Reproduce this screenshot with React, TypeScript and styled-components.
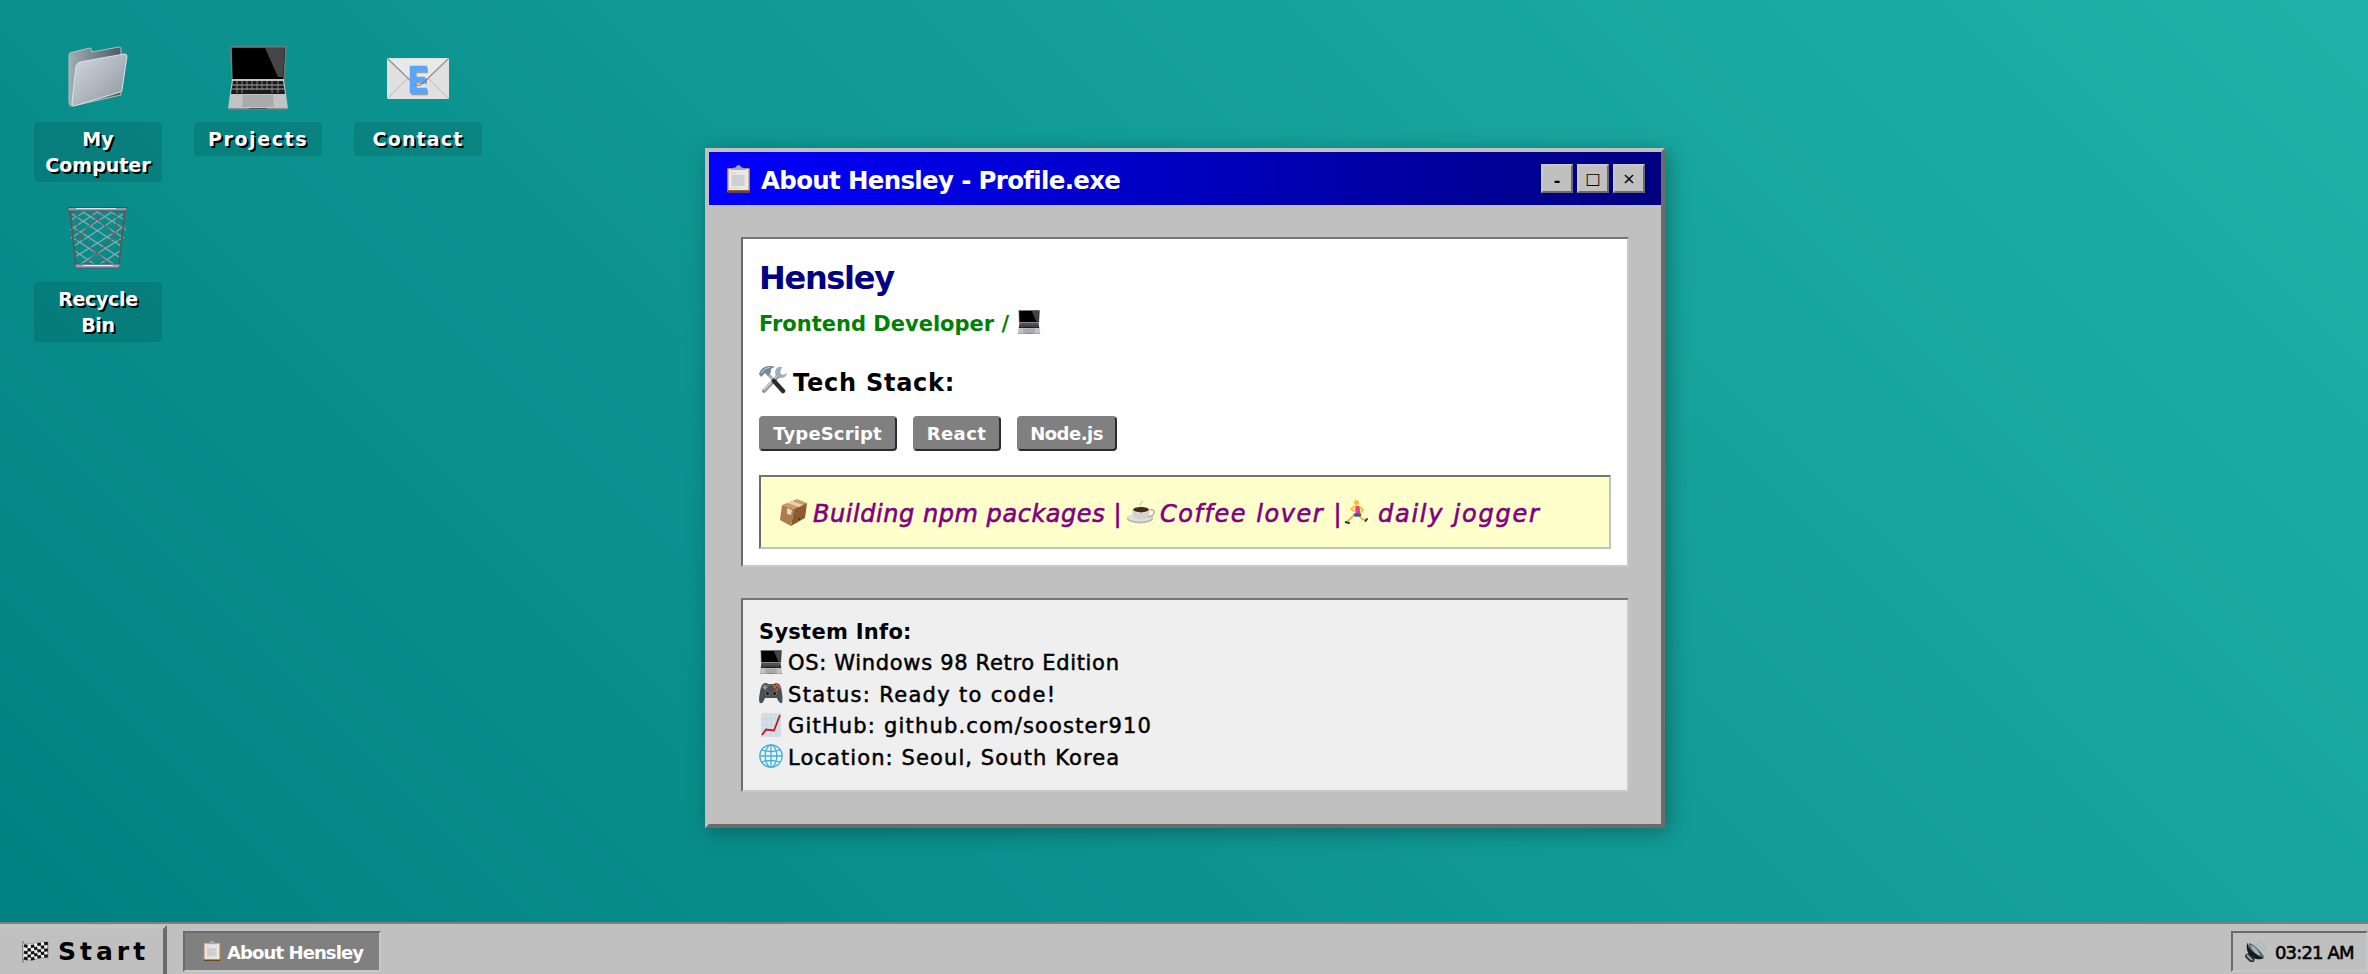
import React from 'react';
import styled, { createGlobalStyle } from 'styled-components';

const GlobalStyle = createGlobalStyle`
  * { box-sizing: border-box; }
  body {
    margin: 0;
    overflow: hidden;
    font-family: "DejaVu Sans", sans-serif;
    color: #000;
  }
`;

const Screen = styled.div`
  position: relative;
  width: 100%;
  height: 974px;
  display: flex;
  flex-direction: column;
  background: linear-gradient(45deg, #008080, #20b2aa);
`;

const Desktop = styled.main`
  flex: 1;
  position: relative;
  padding: 46px 34px;
`;

const IconGrid = styled.div`
  display: grid;
  grid-template-columns: repeat(3, 128px);
  grid-auto-rows: 136px;
  gap: 24px 32px;
`;

const Shortcut = styled.div`
  display: flex;
  flex-direction: column;
  align-items: center;
  gap: 12px;
  svg { flex: none; }
`;

const ShortcutLabel = styled.span<{ $spacing: number }>`
  width: 128px;
  padding: 4px 6px;
  border-radius: 4px;
  background: rgba(0, 0, 0, 0.1);
  color: #fff;
  font-size: 19px;
  font-weight: 700;
  line-height: 26px;
  letter-spacing: ${(p) => p.$spacing}px;
  text-align: center;
  text-shadow: 2px 2px 0 #000;
`;

const Window = styled.section`
  position: absolute;
  left: 705px;
  top: 148px;
  width: 960px;
  border: 4px solid;
  border-color: #c0c0c0 #6b6b6b #6b6b6b #c0c0c0;
  background: #c0c0c0;
  box-shadow: 4px 4px 20px rgba(0, 0, 0, 0.3);
`;

const TitleBar = styled.header`
  height: 53px;
  padding: 0 16px 0 17px;
  display: flex;
  align-items: center;
  justify-content: space-between;
  background: linear-gradient(90deg, #0000ff, #000080);
`;

const Title = styled.h1`
  margin: 0;
  display: flex;
  align-items: center;
  gap: 10px;
  color: #fff;
  font-size: 24.5px;
  line-height: 30px;
  letter-spacing: -0.68px;
  span { padding-top: 4px; }
`;

const Controls = styled.div`
  display: flex;
  gap: 4px;
`;

const ControlButton = styled.button<{ $drop?: number; $bold?: boolean }>`
  width: 32px;
  height: 29px;
  padding: ${(p) => p.$drop ?? 0}px 0 0;
  border: 2px solid;
  border-color: #c8c8c8 #6b6b6b #6b6b6b #c8c8c8;
  background: #c0c0c0;
  color: #000;
  font: ${(p) => (p.$bold ? 700 : 400)} 16px/20px "DejaVu Sans", sans-serif;
`;

const WindowBody = styled.div`
  padding: 32px;
  display: flex;
  flex-direction: column;
  gap: 31px;
`;

const Panel = styled.div<{ $tone: string }>`
  padding: 16px;
  border: 2px solid;
  border-color: #757575 #c8c8c8 #c8c8c8 #6b6b6b;
  background: ${(p) => p.$tone};
`;

const Name = styled.h2`
  margin: 0;
  color: #000080;
  font-size: 32px;
  line-height: 47px;
  letter-spacing: -1.3px;
`;

const Role = styled.p`
  margin: 0;
  display: flex;
  align-items: center;
  gap: 8px;
  color: #008000;
  font-size: 21px;
  font-weight: 700;
  line-height: 43px;
  span { padding-top: 1px; margin-bottom: -1px; }
  svg { margin-bottom: 3px; }
`;

const SectionTitle = styled.h3`
  margin: 18px 0 13px;
  display: flex;
  align-items: center;
  gap: 6px;
  font-size: 24px;
  line-height: 40px;
  letter-spacing: 0.75px;
  svg { margin-bottom: 6px; }
`;

const Chips = styled.div`
  display: flex;
  gap: 16px;
`;

const Chip = styled.span<{ $width: number; $spacing: number }>`
  width: ${(p) => p.$width}px;
  height: 35px;
  padding-right: 1px;
  border: 2px solid;
  border-color: #808080 #2c2c2c #2c2c2c #808080;
  border-radius: 4px;
  background: #808080;
  color: #fff;
  font-size: 18px;
  font-weight: 700;
  line-height: 31px;
  letter-spacing: ${(p) => p.$spacing}px;
  text-align: center;
`;

const Quote = styled.div`
  height: 74px;
  margin-top: 24px;
  padding: 0 19px;
  border: 2px solid;
  border-color: #757575 #c0c0c0 #c0c0c0 #6b6b6b;
  background: #ffffcc;
  display: flex;
  align-items: center;
  color: #800080;
  font-size: 24px;
  font-style: italic;
  -webkit-text-stroke: 0.6px #800080;
  svg { flex: none; }
`;

const QuotePart = styled.span<{ $width: number; $spacing: number; $indent?: number }>`
  width: ${(p) => p.$width}px;
  padding: 3px 0 0 ${(p) => p.$indent ?? 5}px;
  letter-spacing: ${(p) => p.$spacing}px;
  white-space: nowrap;
`;

const InfoTitle = styled.h4`
  margin: 0;
  padding-top: 1px;
  height: 31.5px;
  font-size: 21px;
  line-height: 31.5px;
  letter-spacing: 0.27px;
`;

const InfoLine = styled.div<{ $spacing: number }>`
  height: 31.5px;
  display: flex;
  align-items: center;
  gap: 5px;
  font-size: 21px;
  line-height: 31.5px;
  letter-spacing: ${(p) => p.$spacing}px;
  -webkit-text-stroke: 0.5px #000;
  span { padding-top: 1px; }
  svg { margin-bottom: 3px; }
`;

const Taskbar = styled.footer`
  height: 52px;
  border-top: 2px solid #808080;
  display: flex;
  align-items: flex-start;
  background: #c0c0c0;
  overflow: hidden;
`;

const StartButton = styled.button`
  width: 167px;
  height: 54px;
  margin-top: 1px;
  padding: 0 0 1px 22px;
  border: 4px solid;
  border-left: 0;
  border-color: #c4c4c4 #6b6b6b #6b6b6b #c4c4c4;
  background: #c0c0c0;
  display: flex;
  align-items: center;
  gap: 9px;
  color: #000;
  font: 700 25px/30px "DejaVu Sans", sans-serif;
  letter-spacing: 4px;
`;

const TaskButton = styled.button`
  width: 198px;
  height: 41px;
  margin: 7px 0 0 16px;
  padding: 2px 0 0 18px;
  border: 2px solid;
  border-color: #6b6b6b #c8c8c8 #c8c8c8 #6b6b6b;
  background: #808080;
  display: flex;
  align-items: center;
  gap: 6px;
  color: #fff;
  font: 700 18px/24px "DejaVu Sans", sans-serif;
  letter-spacing: -0.9px;
  white-space: nowrap;
  svg { flex: none; margin-bottom: 4px; }
`;

const Tray = styled.div`
  width: 137px;
  height: 41px;
  margin: 7px 0 0 auto;
  padding: 1px 0 0 11px;
  border: 2px solid;
  border-color: #6b6b6b #c8c8c8 #c8c8c8 #6b6b6b;
  display: flex;
  align-items: center;
  gap: 7px;
  font-size: 18px;
  letter-spacing: -0.85px;
  white-space: nowrap;
  -webkit-text-stroke: 0.6px #000;
  svg { flex: none; }
`;

const FolderIcon = () => (
  <svg width="64" height="64" viewBox="0 0 64 64">
    <defs>
      <linearGradient id="folderFront" x1="0" y1="0" x2="1" y2="1">
        <stop offset="0" stopColor="#d3dae1" />
        <stop offset="1" stopColor="#8c949d" />
      </linearGradient>
      <linearGradient id="folderBack" x1="0" y1="0" x2="1" y2="0">
        <stop offset="0" stopColor="#a3adb5" />
        <stop offset="1" stopColor="#4d5a67" />
      </linearGradient>
    </defs>
    <path d="M3 9q0-2 2-2.500L24 2q2 0 2 4l27-5q2 0 2 2v46L7 60q-4 1-4-4z" fill="url(#folderBack)" stroke="#b4bec5" />
    <path d="M14 16l44-8q3 0 3 2l-5 34q0 2-2 2L8 60q-2 0-2-3l4-37q1-3 4-4z" fill="url(#folderFront)" stroke="#dce2e7" />
  </svg>
);

const LaptopIcon = ({ size }: { size: number }) => (
  <svg width={size} height={size} viewBox="0 0 62 64">
    <path d="M4 1h55l-2 33H5z" fill="#000" stroke="#77797b" strokeWidth="1.5" />
    <path d="M38 2h20l-2 29h-5z" fill="#454545" />
    <path d="M5 33h52l4 30H1z" fill="#c2c3c5" />
    <path d="M6 35h50l2 13H4z" fill="#1b1b1b" />
    <path d="M5 39h52M5 43h52" stroke="#a9a9a9" strokeWidth="1" />
    <path d="M10 35v12M15 35v12M20 35v9M25 35v9M30 35v9M35 35v9M40 35v9M45 35v12M51 35v12" stroke="#9b9b9b" strokeWidth=".8" />
    <path d="M16 49h30l1 12H15z" fill="#a9aaab" />
    <path d="M1 63h60" stroke="#7a7a7a" strokeWidth="1.5" />
    <path d="M22 62.500h18" stroke="#555" />
  </svg>
);

const MailIcon = () => (
  <svg width="64" height="64" viewBox="0 0 64 64">
    <rect x="1" y="12" width="62" height="41" rx="1.500" fill="#e0e0e1" />
    <path d="M2 52l21-21M62 52L41 31" stroke="#b9b9ba" />
    <path d="M2 13l26 25q4 3 8 0l26-25" fill="#e9e9ea" stroke="#8f9094" strokeWidth="1.200" />
    <path d="M42 24.500H28v22h14M28 35h13" stroke="#4d5a68" strokeWidth="5.500" fill="none" opacity=".5" />
    <path d="M41 22.500H26.500v22H41M26 33.500h13" stroke="#5aa5f8" strokeWidth="5.500" fill="none" />
  </svg>
);

const BinIcon = () => (
  <svg width="64" height="64" viewBox="0 0 64 64">
    <g fill="none" stroke="#93a5ad" strokeWidth="1.300">
      <path d="M6 8l49 32M5 20l48 31M7 32l42 27M9 45l22 15M17 6l41 26M30 5l30 19M43 5l16 9" />
      <path d="M57 8L8 40M59 20L9 51M56 32L13 59M54 45L31 60M46 6L5 32M33 5L4 24M20 5L5 14" />
    </g>
    <g fill="none" stroke="#5c6468" strokeWidth="1.200">
      <path d="M12 6q-4 20 8 31t24 22M22 6q22 16 34 32M50 6q4 20-8 31T18 59M40 6Q18 22 8 38" />
    </g>
    <path d="M4 5l6 54M59 5l-6 54" stroke="#5c5557" strokeWidth="1.800" />
    <path d="M2 1.500h59q1 3-2 3.500H3Q1 5 2 1.500z" fill="#8aa0b2" stroke="#524c4e" strokeWidth="1" />
    <path d="M10 2.500h40" stroke="#d5e6f5" strokeWidth="1.200" />
    <path d="M9 58h45v2q0 2-2 2H11q-2 0-2-2z" fill="#94a4bb" stroke="#55525a" />
    <path d="M17 59.500h30" stroke="#e2ecf5" />
  </svg>
);

const ClipboardIcon = ({ width, height }: { width: number; height: number }) => (
  <svg width={width} height={height} viewBox="0 0 24 28">
    <rect x=".6" y="3" width="22.800" height="24.500" rx="1" fill="#b98443" />
    <path d="M1 26.500h22" stroke="#70431a" strokeWidth="2" />
    <rect x="2" y="4" width="20" height="21" fill="#e8e8e8" />
    <rect x="5" y="10" width="13" height="11" fill="#cfcfd0" />
    <path d="M4 8h7M4 23h8" stroke="#d3d3d3" />
    <path d="M4 5q1-2.500 5-2.500Q10 0 12 0t3 2.500q4 0 5 2.500z" fill="#9fa9b5" />
  </svg>
);

const ToolsIcon = () => (
  <svg width="28" height="28" viewBox="0 0 28 28">
    <path d="M20 9L5 25" stroke="#8e979f" strokeWidth="4" strokeLinecap="round" />
    <path d="M20 8L5 24" stroke="#cfd6dc" strokeWidth="1.300" />
    <path d="M23 1q-6-1-7 5 0 6 6 6 5 0 6-5l-4 2-3-2z" fill="#a3adb6" />
    <path d="M9 8l8 9" stroke="#a4acb4" strokeWidth="3" />
    <path d="M15 15l9 10" stroke="#2b2c30" strokeWidth="4.500" strokeLinecap="round" />
    <path d="M0 8q2-7 9-8 5-.5 7 1-5 1-4 5L9 10 6 7 2 11z" fill="#76879a" />
    <path d="M2 7q3-5 9-6" stroke="#c8d2da" fill="none" />
  </svg>
);

const PackageIcon = () => (
  <svg width="28" height="27" viewBox="0 0 28 27">
    <path d="M2 6L17 0l10 4-13 6z" fill="#c99c6b" />
    <path d="M2 6l12 4-3 17-11-6z" fill="#b07a49" />
    <path d="M14 10l13-6-2 15-14 8z" fill="#8d5a32" />
    <path d="M7 4l5-2 11 4-4 2z" fill="#e6cfb3" />
    <path d="M7 9l5 2-1 5-4-1z" fill="#d9dada" />
    <path d="M17 20l3-1v2z" fill="#4b2d16" />
  </svg>
);

const CoffeeIcon = () => (
  <svg width="28" height="23" viewBox="0 0 28 23">
    <ellipse cx="13" cy="17.500" rx="13" ry="5" fill="#b9b9b6" />
    <ellipse cx="13" cy="16.500" rx="12" ry="4" fill="#e0e0dc" />
    <path d="M22 9q6-1 5 3t-7 4" fill="none" stroke="#b4b4b0" strokeWidth="1.600" />
    <path d="M5 8q0 11 9 11t9-11z" fill="#d2d2ce" />
    <ellipse cx="14" cy="8.500" rx="9" ry="3.300" fill="#efefec" />
    <ellipse cx="14" cy="8.700" rx="7.800" ry="2.700" fill="#4a2a18" />
    <path d="M14 5q-3-2 0-3t1-2" stroke="#c9c9b4" fill="none" />
  </svg>
);

const RunnerIcon = () => (
  <svg width="23" height="24" viewBox="0 0 23 24" fill="none" strokeLinecap="round" strokeLinejoin="round">
    <path d="M10 14L6 18l-4 4M14 15l3 4 4 1" stroke="#f4b62c" strokeWidth="2" />
    <path d="M0 22l4 1M20.500 21l1.500-2" stroke="#1d3a52" strokeWidth="2" />
    <path d="M10 6L6 9l3 2M15 7l3 3-2 3" stroke="#fcc235" strokeWidth="2" />
    <path d="M12.500 8l.3 4.500" stroke="#e83f77" strokeWidth="4.500" />
    <path d="M10.500 15l4 0" stroke="#3f55a5" strokeWidth="3.500" />
    <circle cx="11.500" cy="2.500" r="2.500" fill="#f8bd32" />
  </svg>
);

const GamepadIcon = () => (
  <svg width="24" height="24" viewBox="0 0 24 24">
    <path d="M4 3q3-2 5 0h6q2-2 5 0 2 1 3 9t0 10q-3 1-5-5H6q-2 6-5 5-2-2 0-11 1-7 3-8z" fill="#4d4f50" />
    <path d="M3 5q9-2 18 0" stroke="#747677" fill="none" />
    <path d="M6 4v5M3.500 6.500h5" stroke="#9a9c9d" strokeWidth="1.500" />
    <circle cx="8.500" cy="12.500" r="2.200" fill="#202122" stroke="#898b8c" strokeWidth=".7" />
    <circle cx="15.500" cy="12.500" r="2.200" fill="#202122" stroke="#898b8c" strokeWidth=".7" />
    <g fill="#e2622b">
      <circle cx="18" cy="4" r="1.200" />
      <circle cx="20.500" cy="6.300" r="1.200" />
      <circle cx="18" cy="8.600" r="1.200" />
      <circle cx="15.700" cy="6.300" r="1.200" />
    </g>
  </svg>
);

const ChartIcon = () => (
  <svg width="24" height="24" viewBox="0 0 24 24">
    <rect x="2" width="20" height="24" fill="#d3dfe9" />
    <path d="M7 0v24M12 0v24M17 0v24M2 6h20M2 12h20M2 18h20" stroke="#c0ccd6" strokeWidth=".5" />
    <path d="M3 22l4-5.500 8 1L21 2" fill="none" stroke="#c9161f" strokeWidth="1.800" />
  </svg>
);

const GlobeIcon = () => (
  <svg width="24" height="24" viewBox="0 0 24 24" fill="none" stroke="#4aafd8" strokeWidth="1.300">
    <circle cx="12" cy="12" r="11.200" fill="#e6f6fc" />
    <ellipse cx="12" cy="12" rx="5.800" ry="11.200" />
    <path d="M12 1v22M1 12h22M3 6q9 3 18 0M3 18q9-3 18 0" />
  </svg>
);

const FlagIcon = () => (
  <svg width="27" height="22" viewBox="0 0 27 22">
    <path d="M1 0v22" stroke="#888" strokeWidth="1.500" />
    <path d="M1 2q7 2 12 0t13-1v16q-7-1-12 1T1 18z" fill="#f1f1f1" stroke="#777" strokeWidth=".5" />
    <path
      d="M2 4.500q6 2 11 0t13-2M2 11q6 2 11 0t13-2M2 17q6 2 11 0t13-2"
      stroke="#141414"
      strokeWidth="3.200"
      strokeDasharray="3.600 3.300"
      fill="none"
    />
    <path
      d="M2 7.800q6 2 11 0t13-2M2 14q6 2 11 0t13-2"
      stroke="#141414"
      strokeWidth="3.200"
      strokeDasharray="3.600 3.300"
      strokeDashoffset="3.500"
      fill="none"
    />
  </svg>
);

const SpeakerIcon = () => (
  <svg width="24" height="24" viewBox="0 0 24 24">
    <path d="M13 2q7-1 9 9M11 5q7 0 8 6" stroke="#8fb9ba" fill="none" />
    <path d="M1 15l5-3 5 6-1 4-4 0-5-5z" fill="#33393c" />
    <path d="M5 3q3 0 10 7t4 9q-8-1-12-6t-2-10z" fill="#55666c" />
    <path d="M4 3q-1 4 4 8t11 7q-2 2-7 1-8-4-9-9-1-6 1-7z" fill="#17191b" />
    <path d="M6 5q5 0 11 11-7-1-11-11z" fill="#9fb4b8" />
    <path d="M3 15l5 5" stroke="#b5babc" strokeWidth="1.500" />
  </svg>
);

const shortcuts = [
  { label: 'My Computer', icon: <FolderIcon />, spacing: 0 },
  { label: 'Projects', icon: <LaptopIcon size={64} />, spacing: 1.6 },
  { label: 'Contact', icon: <MailIcon />, spacing: 1.15 },
  { label: 'Recycle Bin', icon: <BinIcon />, spacing: -0.3 },
];

const chips = [
  { label: 'TypeScript', width: 138, spacing: 0.15 },
  { label: 'React', width: 88, spacing: 0.4 },
  { label: 'Node.js', width: 100, spacing: -0.5 },
];

const info = [
  { icon: <LaptopIcon size={24} />, text: 'OS: Windows 98 Retro Edition', spacing: 0.68 },
  { icon: <GamepadIcon />, text: 'Status: Ready to code!', spacing: 1.32 },
  { icon: <ChartIcon />, text: 'GitHub: github.com/sooster910', spacing: 1.18 },
  { icon: <GlobeIcon />, text: 'Location: Seoul, South Korea', spacing: 1.1 },
];

export default function App() {
  return (
    <>
      <GlobalStyle />
      <Screen>
        <Desktop>
          <IconGrid>
            {shortcuts.map((s) => (
              <Shortcut key={s.label}>
                {s.icon}
                <ShortcutLabel $spacing={s.spacing}>{s.label}</ShortcutLabel>
              </Shortcut>
            ))}
          </IconGrid>
          <Window>
            <TitleBar>
              <Title>
                <ClipboardIcon width={25} height={28} />
                <span>About Hensley - Profile.exe</span>
              </Title>
              <Controls>
                <ControlButton $drop={4} $bold>-</ControlButton>
                <ControlButton>□</ControlButton>
                <ControlButton>×</ControlButton>
              </Controls>
            </TitleBar>
            <WindowBody>
              <Panel $tone="#fff">
                <Name>Hensley</Name>
                <Role>
                  <span>Frontend Developer /</span>
                  <LaptopIcon size={24} />
                </Role>
                <SectionTitle>
                  <ToolsIcon />
                  <span>Tech Stack:</span>
                </SectionTitle>
                <Chips>
                  {chips.map((c) => (
                    <Chip key={c.label} $width={c.width} $spacing={c.spacing}>
                      {c.label}
                    </Chip>
                  ))}
                </Chips>
                <Quote>
                  <PackageIcon />
                  <QuotePart $width={319} $spacing={0.55}>Building npm packages |</QuotePart>
                  <CoffeeIcon />
                  <QuotePart $width={190} $spacing={1.55}>Coffee lover |</QuotePart>
                  <RunnerIcon />
                  <QuotePart $width={180} $spacing={1.75} $indent={10}>daily jogger</QuotePart>
                </Quote>
              </Panel>
              <Panel $tone="#efefef">
                <InfoTitle>System Info:</InfoTitle>
                {info.map((line) => (
                  <InfoLine key={line.text} $spacing={line.spacing}>
                    {line.icon}
                    <span>{line.text}</span>
                  </InfoLine>
                ))}
              </Panel>
            </WindowBody>
          </Window>
        </Desktop>
        <Taskbar>
          <StartButton>
            <FlagIcon />
            Start
          </StartButton>
          <TaskButton>
            <ClipboardIcon width={18} height={22} />
            About Hensley
          </TaskButton>
          <Tray>
            <SpeakerIcon />
            <span>03:21 AM</span>
          </Tray>
        </Taskbar>
      </Screen>
    </>
  );
}
